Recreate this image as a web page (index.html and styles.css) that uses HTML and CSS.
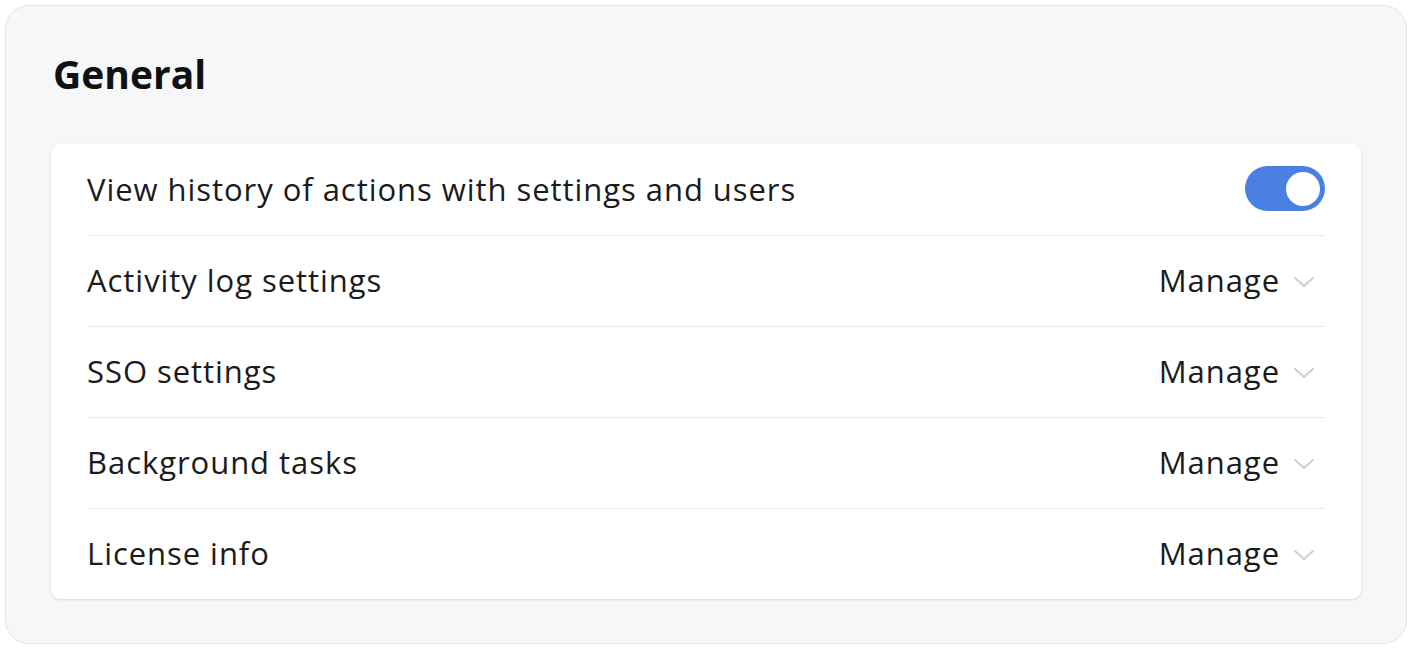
FILE: index.html
```html
<!DOCTYPE html>
<html lang="en">
<head>
<meta charset="utf-8">
<title>General</title>
<link rel="stylesheet" href="styles.css">
</head>
<body>
<section class="panel">
  <h1 class="panel-title">General</h1>
  <div class="settings-card">
    <div class="row">
      <span class="row-label">View history of actions with settings and users</span>
      <span class="toggle is-on"><span class="knob"></span></span>
    </div>
    <div class="row">
      <span class="row-label">Activity log settings</span>
      <span class="manage">Manage <svg class="chev" width="22" height="12" viewBox="0 0 22 12"><path d="M2 2 L11 10 L20 2" fill="none" stroke="#cfcfcf" stroke-width="2" stroke-linecap="round" stroke-linejoin="round"/></svg></span>
    </div>
    <div class="row">
      <span class="row-label">SSO settings</span>
      <span class="manage">Manage <svg class="chev" width="22" height="12" viewBox="0 0 22 12"><path d="M2 2 L11 10 L20 2" fill="none" stroke="#cfcfcf" stroke-width="2" stroke-linecap="round" stroke-linejoin="round"/></svg></span>
    </div>
    <div class="row">
      <span class="row-label">Background tasks</span>
      <span class="manage">Manage <svg class="chev" width="22" height="12" viewBox="0 0 22 12"><path d="M2 2 L11 10 L20 2" fill="none" stroke="#cfcfcf" stroke-width="2" stroke-linecap="round" stroke-linejoin="round"/></svg></span>
    </div>
    <div class="row">
      <span class="row-label">License info</span>
      <span class="manage">Manage <svg class="chev" width="22" height="12" viewBox="0 0 22 12"><path d="M2 2 L11 10 L20 2" fill="none" stroke="#cfcfcf" stroke-width="2" stroke-linecap="round" stroke-linejoin="round"/></svg></span>
    </div>
  </div>
</section>
</body>
</html>
```
FILE: styles.css
```css
* { box-sizing: border-box; }
html, body { background: #ffffff; }
body {
  margin: 0;
  padding: 5px 5px 0 5px;
  font-family: "Open Sans", "Noto Sans", sans-serif;
  color: #1b1b1b;
}
.panel {
  width: 1402px;
  height: 639px;
  background: #f6f7f9;
  border: 1px solid #e1e3e7;
  border-radius: 24px;
  padding: 0 45px 0 45px;
}
.panel-title {
  margin: 0;
  padding-top: 44px;
  height: 138px;
  font-size: 39px;
  line-height: 48px;
  font-weight: 700;
  color: #111;
  padding-left: 2px;
}
.settings-card {
  background: #fff;
  border-radius: 9px;
  box-shadow: 0 1px 3px rgba(0,0,0,0.12);
  padding: 0 36px;
}
.row {
  height: 91px;
  display: flex;
  align-items: center;
  justify-content: space-between;
  border-bottom: 1px solid #ebebeb;
  font-size: 31px;
  letter-spacing: 0.95px;
  padding-bottom: 2px;
}
.row:first-child { height: 92px; }
.row:last-child { border-bottom: none; height: 90px; }
.row-label { white-space: nowrap; }
.manage {
  display: flex;
  align-items: center;
  gap: 13px;
  margin-right: 10px;
}
.chev { display: block; margin-top: 4px; }
.toggle {
  width: 80px;
  height: 45px;
  border-radius: 23px;
  background: #4a80e1;
  display: flex;
  align-items: center;
  justify-content: flex-end;
  padding-right: 5px;
}
.knob {
  width: 34px;
  height: 34px;
  border-radius: 50%;
  background: #fff;
}
```
